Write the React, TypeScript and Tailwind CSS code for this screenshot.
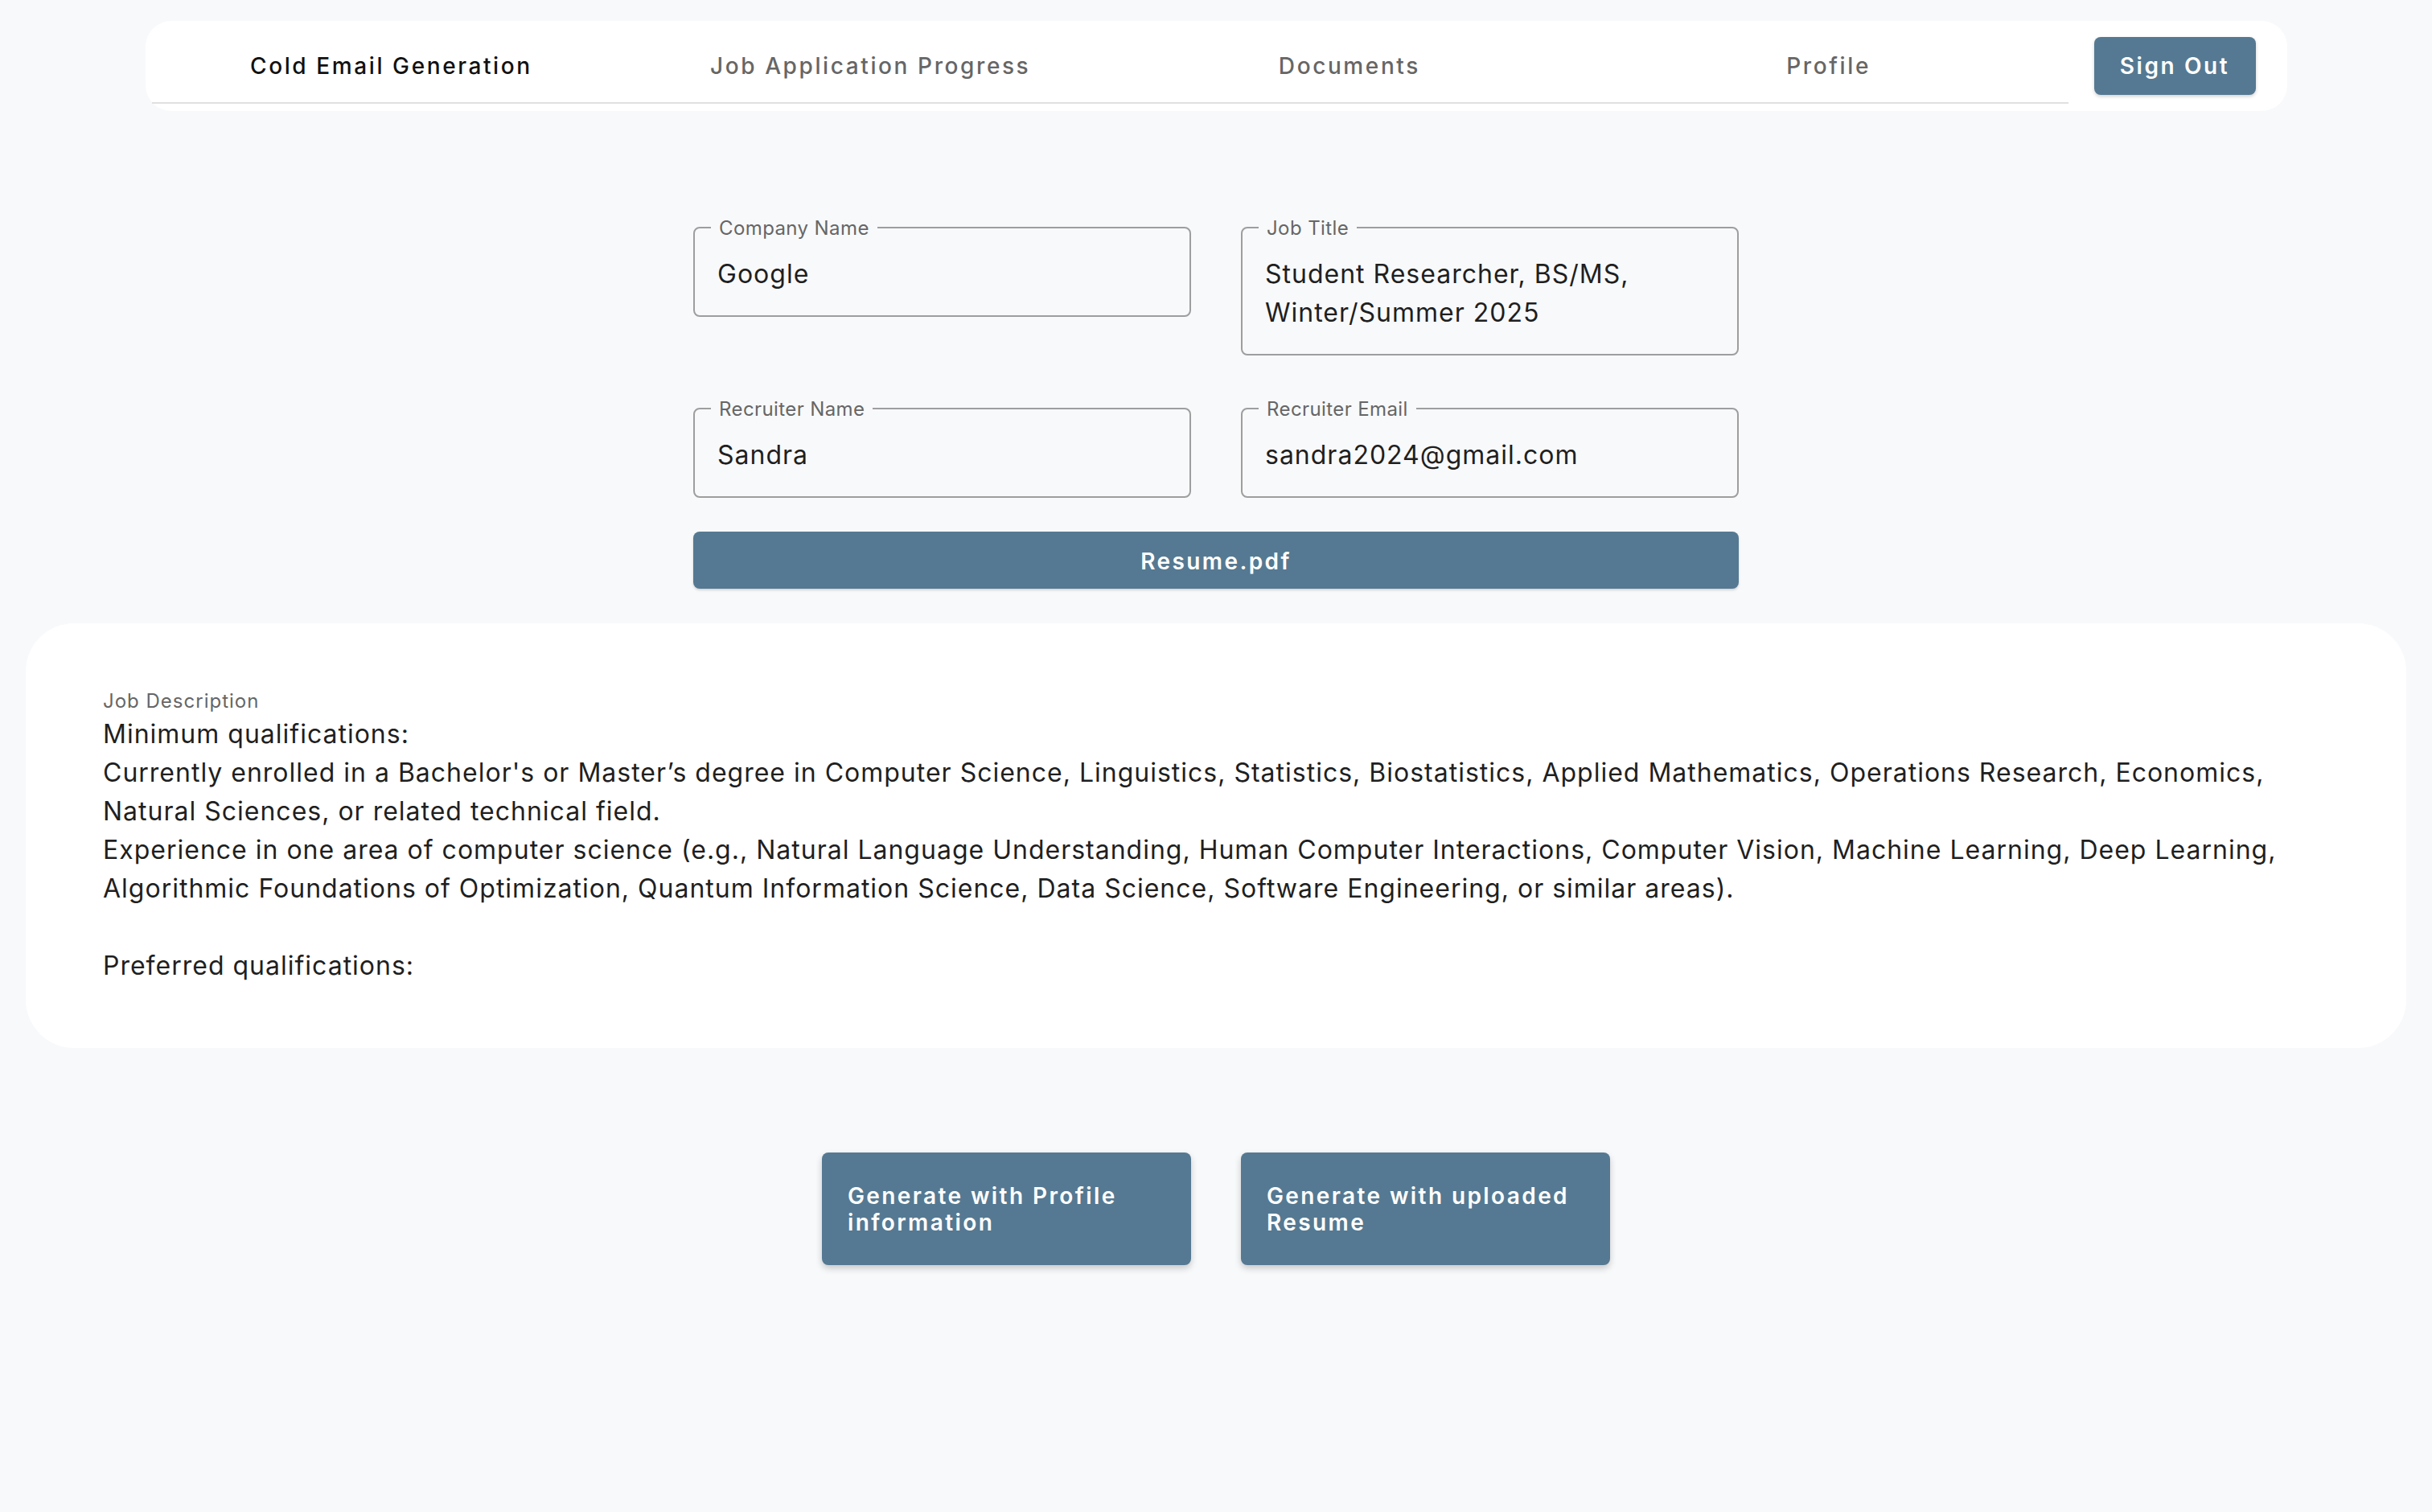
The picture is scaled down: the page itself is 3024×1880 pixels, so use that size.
import React from "react";

const tabs = ["Cold Email Generation", "Job Application Progress", "Documents", "Profile"];

function Field({ label, lines }: { label: string; lines: string[] }) {
  return (
    <div className="relative rounded-[8px] border-2 border-[#9e9e9e] px-[28px] pb-[27px] pt-[33px]">
      <span className="absolute left-[20px] top-0 -translate-y-1/2 bg-[#f8f9fb] px-[10px] text-[24px] leading-[30px] tracking-[0.4px] text-[#666666]">
        {label}
      </span>
      {lines.map((l, i) => (
        <div key={i} className="text-[32px] leading-[48px] tracking-[1px] text-[#1f1f1f] whitespace-nowrap">
          {l}
        </div>
      ))}
    </div>
  );
}

const jd = [
  "Minimum qualifications:",
  "Currently enrolled in a Bachelor's or Master\u2019s degree in Computer Science, Linguistics, Statistics, Biostatistics, Applied Mathematics, Operations Research, Economics,",
  "Natural Sciences, or related technical field.",
  "Experience in one area of computer science (e.g., Natural Language Understanding, Human Computer Interactions, Computer Vision, Machine Learning, Deep Learning,",
  "Algorithmic Foundations of Optimization, Quantum Information Science, Data Science, Software Engineering, or similar areas).",
  "",
  "Preferred qualifications:",
];

export default function App() {
  return (
    <div
      className="min-h-[1880px] w-full bg-[#f8f9fb] pt-[26px]"
      style={{ fontFamily: "Inter, 'Noto Sans', sans-serif" }}
    >
      {/* Nav */}
      <div className="mx-auto flex h-[112px] w-[2663px] items-start rounded-[32px] bg-white px-[8px] pt-[7px]">
        <div className="flex h-[96px] flex-1 border-b-2 border-[#e0e0e0]">
          {tabs.map((t, i) => (
            <div
              key={t}
              className={
                "flex flex-1 items-center justify-center pt-[3px] text-[28px] font-medium tracking-[2.6px] " +
                (i === 0 ? "text-[#111111]" : "text-[#666666]")
              }
            >
              {t}
            </div>
          ))}
        </div>
        <button className="ml-[32px] mr-[31px] mt-[13px] flex h-[72px] w-[201px] items-center justify-center rounded-[8px] bg-[#557992] text-[28px] font-semibold tracking-[2.6px] text-white shadow-[0_2px_4px_rgba(0,0,0,0.18)]">
          Sign Out
        </button>
      </div>

      {/* Form */}
      <div className="mx-auto mt-[144px] w-[1300px]">
        <div className="grid grid-cols-2 items-start gap-x-[62px] gap-y-[65px]">
          <Field label="Company Name" lines={["Google"]} />
          <Field label="Job Title" lines={["Student Researcher, BS/MS,", "Winter/Summer 2025"]} />
          <Field label="Recruiter Name" lines={["Sandra"]} />
          <Field label="Recruiter Email" lines={["sandra2024@gmail.com"]} />
        </div>
        <button className="mt-[42px] flex h-[71px] w-full items-center justify-center rounded-[8px] bg-[#557992] pt-[2px] text-[28px] font-semibold tracking-[2.4px] text-white shadow-[0_2px_3px_rgba(0,0,0,0.15)]">
          Resume.pdf
        </button>
      </div>

      {/* Job description card */}
      <div className="mx-[32px] mt-[43px] rounded-[60px] bg-white pb-[78px] pl-[96px] pr-[80px] pt-[82px]">
        <div className="text-[24px] leading-[30px] tracking-[1px] text-[#666666]">Job Description</div>
        <div className="mt-[2px]">
          {jd.map((l, i) => (
            <div key={i} className="h-[48px] whitespace-nowrap text-[32px] leading-[48px] tracking-[1px] text-[#1f1f1f]">
              {l}
            </div>
          ))}
        </div>
      </div>

      {/* Generate buttons */}
      <div className="mt-[130px] flex justify-center gap-[62px]">
        <button className="flex h-[140px] w-[459px] flex-col items-start justify-center rounded-[8px] bg-[#557992] px-[32px] pt-[1px] text-left text-[28px] font-semibold leading-[33px] tracking-[2.4px] text-white shadow-[0_4px_8px_rgba(0,0,0,0.2)]">
          <span>Generate with Profile</span>
          <span>information</span>
        </button>
        <button className="flex h-[140px] w-[459px] flex-col items-start justify-center rounded-[8px] bg-[#557992] px-[32px] pt-[1px] text-left text-[28px] font-semibold leading-[33px] tracking-[2.4px] text-white shadow-[0_4px_8px_rgba(0,0,0,0.2)]">
          <span>Generate with uploaded</span>
          <span>Resume</span>
        </button>
      </div>
    </div>
  );
}
